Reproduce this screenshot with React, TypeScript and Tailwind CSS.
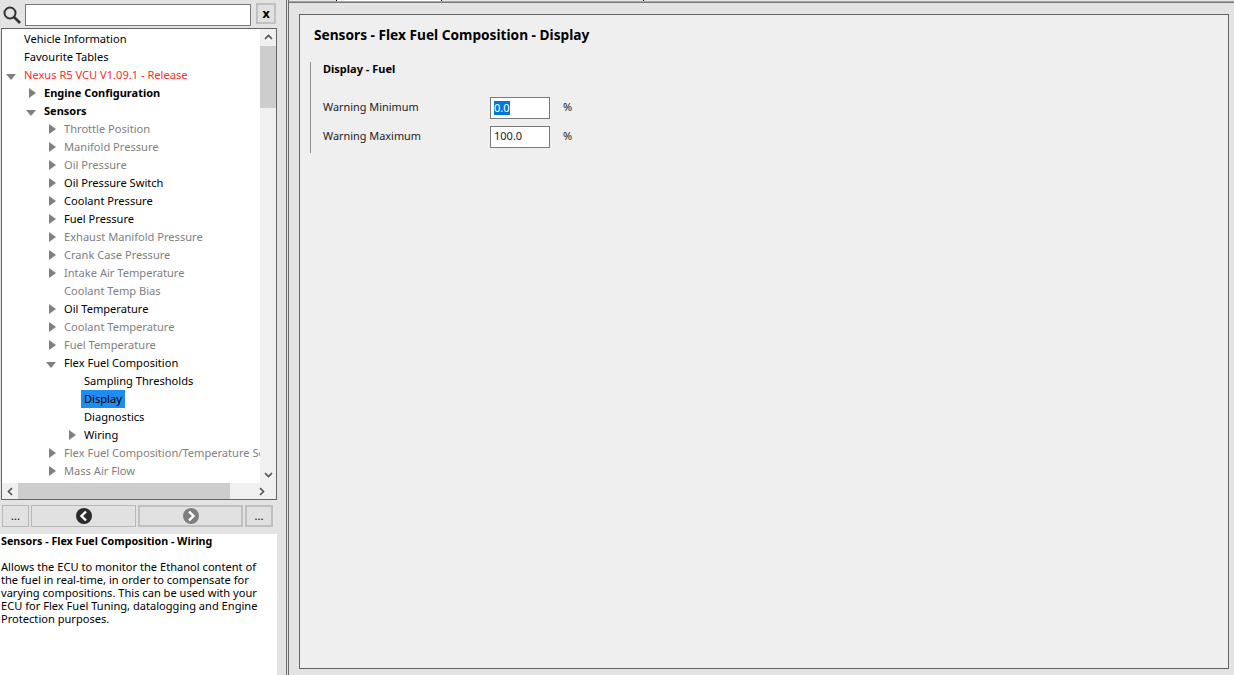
const font = { fontFamily: '"Noto Sans", sans-serif' };

type Row = { t: string; d: number; a?: 'r' | 'd'; c?: string; bold?: boolean; sel?: boolean };
const rows: Row[] = [
  { t: 'Vehicle Information', d: 0 },
  { t: 'Favourite Tables', d: 0 },
  { t: 'Nexus R5 VCU V1.09.1 - Release', d: 0, a: 'd', c: 'text-[#ff2a2a]' },
  { t: 'Engine Configuration', d: 1, a: 'r', bold: true },
  { t: 'Sensors', d: 1, a: 'd', bold: true },
  { t: 'Throttle Position', d: 2, a: 'r', c: 'text-[#808080]' },
  { t: 'Manifold Pressure', d: 2, a: 'r', c: 'text-[#808080]' },
  { t: 'Oil Pressure', d: 2, a: 'r', c: 'text-[#808080]' },
  { t: 'Oil Pressure Switch', d: 2, a: 'r' },
  { t: 'Coolant Pressure', d: 2, a: 'r' },
  { t: 'Fuel Pressure', d: 2, a: 'r' },
  { t: 'Exhaust Manifold Pressure', d: 2, a: 'r', c: 'text-[#808080]' },
  { t: 'Crank Case Pressure', d: 2, a: 'r', c: 'text-[#808080]' },
  { t: 'Intake Air Temperature', d: 2, a: 'r', c: 'text-[#808080]' },
  { t: 'Coolant Temp Bias', d: 2, c: 'text-[#808080]' },
  { t: 'Oil Temperature', d: 2, a: 'r' },
  { t: 'Coolant Temperature', d: 2, a: 'r', c: 'text-[#808080]' },
  { t: 'Fuel Temperature', d: 2, a: 'r', c: 'text-[#808080]' },
  { t: 'Flex Fuel Composition', d: 2, a: 'd' },
  { t: 'Sampling Thresholds', d: 3 },
  { t: 'Display', d: 3, sel: true },
  { t: 'Diagnostics', d: 3 },
  { t: 'Wiring', d: 3, a: 'r' },
  { t: 'Flex Fuel Composition/Temperature Sensor', d: 2, a: 'r', c: 'text-[#808080]' },
  { t: 'Mass Air Flow', d: 2, a: 'r', c: 'text-[#808080]' },
];

function Arrow({ a }: { a: 'r' | 'd' }) {
  return a === 'r' ? (
    <svg width="12" height="12" viewBox="0 0 12 12" className="block"><path d="M4 1 L11 6 L4 11 Z" fill="#808080" /></svg>
  ) : (
    <svg width="12" height="12" viewBox="0 0 12 12" className="block"><path d="M1 5 L11 5 L6 11 Z" fill="#808080" /></svg>
  );
}

function Chevron({ dir }: { dir: 'up' | 'down' | 'left' | 'right' }) {
  const d = { up: 'M1 6 L4.5 2.5 L8 6', down: 'M1 3 L4.5 6.5 L8 3', left: 'M6 1 L2.5 4.5 L6 8', right: 'M3 1 L6.5 4.5 L3 8' }[dir];
  return <svg width="9" height="9" viewBox="0 0 9 9" className="block"><path d={d} fill="none" stroke="#505050" strokeWidth="1.6" /></svg>;
}

function TreeRow({ r }: { r: Row }) {
  return (
    <div className="h-[18px] flex items-center relative whitespace-nowrap" style={{ paddingLeft: 3 + r.d * 20 }}>
      <div className="w-[14px] h-[12px] flex-none">{r.a ? <Arrow a={r.a} /> : null}</div>
      <div className={`ml-[2px] px-[3px] h-[18px] leading-[18px] ${r.bold ? 'text-[11px] font-bold' : 'text-[11.1px]'} ${r.c ?? 'text-black'} ${r.sel ? 'bg-[#1e8cf0]' : ''}`}>{r.t}</div>
    </div>
  );
}

function NavCircle({ fill, left }: { fill: string; left: boolean }) {
  return (
    <svg width="16" height="16" viewBox="0 0 16 16" className="block">
      <circle cx="8" cy="8" r="8" fill={fill} />
      <path d={left ? 'M10 3.5 L5.5 8 L10 12.5' : 'M6 3.5 L10.5 8 L6 12.5'} fill="none" stroke="#fff" strokeWidth="2.4" />
    </svg>
  );
}

export default function App() {
  return (
    <div className="w-[1234px] h-[675px] bg-[#e3e3e3] flex overflow-hidden text-black" style={font}>
      {/* Left column */}
      <div className="w-[277px] flex-none flex flex-col">
        <div className="h-[28px] flex-none flex items-start pt-[3px]">
          <div className="w-[25px] flex-none pl-[3px] pt-[3px]">
            <svg width="18" height="18" viewBox="0 0 18 18" className="block"><circle cx="7" cy="7" r="5.5" fill="none" stroke="#333" strokeWidth="2" /><path d="M11 11 L17 17" stroke="#333" strokeWidth="2.6" /></svg>
          </div>
          <div className="w-[226px] h-[22px] mt-[1px] bg-white border border-[#7a7a7a] flex-none" />
          <div className="ml-[5px] w-[20px] h-[21px] border-2 border-[#c0c0c0] bg-[#e1e1e1] flex items-center justify-center text-[12px] font-bold leading-none" style={{ fontFamily: '"DejaVu Sans", sans-serif' }}>x</div>
        </div>
        <div className="h-[472px] ml-[1px] flex-none border border-[#646464] bg-white flex flex-col">
          <div className="flex-1 flex min-h-0">
            <div className="flex-1 overflow-hidden pt-[1px] min-w-0">
              {rows.map((r) => <TreeRow key={r.t} r={r} />)}
            </div>
            <div className="w-[16px] flex-none bg-[#f0f0f0] flex flex-col">
              <div className="h-[17px] flex items-center justify-center"><Chevron dir="up" /></div>
              <div className="h-[62px] bg-[#cdcdcd]" />
              <div className="flex-1" />
              <div className="h-[17px] flex items-center justify-center"><Chevron dir="down" /></div>
            </div>
          </div>
          <div className="h-[16px] flex-none bg-[#f0f0f0] flex items-center">
            <div className="w-[16px] flex items-center justify-center"><Chevron dir="left" /></div>
            <div className="w-[212px] h-[16px] bg-[#cdcdcd]" />
            <div className="flex-1" />
            <div className="w-[30px] flex items-center justify-center"><Chevron dir="right" /></div>
          </div>
        </div>
        <div className="h-[34px] flex-none flex items-start pl-[2px] gap-[2px] pt-[5px]">
          <div className="w-[27px] h-[22px] border border-[#b8b8b8] bg-[#e1e1e1] flex items-center justify-center text-[11px]">...</div>
          <div className="w-[105px] h-[22px] border border-[#b8b8b8] bg-[#e1e1e1] flex items-center justify-center"><NavCircle fill="#2b2b2b" left /></div>
          <div className="w-[105px] h-[22px] border-2 border-[#c0c0c0] bg-[#e1e1e1] flex items-center justify-center"><NavCircle fill="#7f7f7f" left={false} /></div>
          <div className="w-[28px] h-[22px] border-2 border-[#c0c0c0] bg-[#e1e1e1] flex items-center justify-center text-[11px]">...</div>
        </div>
        <div className="flex-1 bg-white px-[1px] pt-[1px] text-[11.1px] leading-[13px]">
          <div className="font-bold text-[10.7px] h-[13px] whitespace-nowrap">Sensors - Flex Fuel Composition - Wiring</div>
          <div className="mt-[12px]">
            <div className="whitespace-nowrap">Allows the ECU to monitor the Ethanol content of</div>
            <div className="whitespace-nowrap">the fuel in real-time, in order to compensate for</div>
            <div className="whitespace-nowrap">varying compositions. This can be used with your</div>
            <div className="whitespace-nowrap">ECU for Flex Fuel Tuning, datalogging and Engine</div>
            <div className="whitespace-nowrap">Protection purposes.</div>
          </div>
        </div>
      </div>

      {/* Splitter */}
      <div className="w-[10px] flex-none border-r border-[#6a6a6a]" />
      <div className="w-[1px] flex-none" />

      {/* Right column */}
      <div className="flex-1 flex flex-col border-l border-[#6a6a6a] min-w-0">
        <div className="h-[14px] flex-none">
          <div className="h-[1px] flex">
            <div className="w-[47px]" />
            <div className="w-[1px] bg-black" />
            <div className="w-[104px] bg-white" />
            <div className="w-[1px] bg-black" />
            <div className="w-[201px]" />
            <div className="w-[1px] bg-black" />
          </div>
          <div className="h-[1px] bg-[#a8a8a8]" />
          <div className="h-[1px] bg-[#777777]" />
        </div>
        <div className="flex-1 pl-[10px] pr-[5px] pb-[6px] min-h-0">
          <div className="h-full border border-[#646464] bg-[#efefef] pl-[14px] pt-[11px]">
            <div className="text-[13.7px] font-bold leading-[17px] h-[17px] whitespace-nowrap">Sensors - Flex Fuel Composition - Display</div>
            <div className="mt-[19px] ml-[-4px] w-[400px] h-[91px] border-l border-[#8f8f8f] pl-[12px]">
              <div className="text-[11px] font-bold leading-[14px]">Display - Fuel</div>
              <div className="mt-[17px] flex items-center h-[29px] text-[11px] text-[#222]">
                <div className="w-[167px] text-[10.9px]">Warning Minimum</div>
                <div className="w-[60px] h-[22px] bg-white border border-[#7a7a7a] pl-[3px] flex items-center"><span className="bg-[#0078d7] text-white leading-[14px]">0.0</span></div>
                <div className="ml-[13px]">%</div>
              </div>
              <div className="flex items-center h-[29px] text-[11px] text-[#222]">
                <div className="w-[167px] text-[10.9px]">Warning Maximum</div>
                <div className="w-[60px] h-[22px] bg-white border border-[#7a7a7a] pl-[3px] flex items-center">100.0</div>
                <div className="ml-[13px]">%</div>
              </div>
            </div>
          </div>
        </div>
      </div>
    </div>
  );
}
